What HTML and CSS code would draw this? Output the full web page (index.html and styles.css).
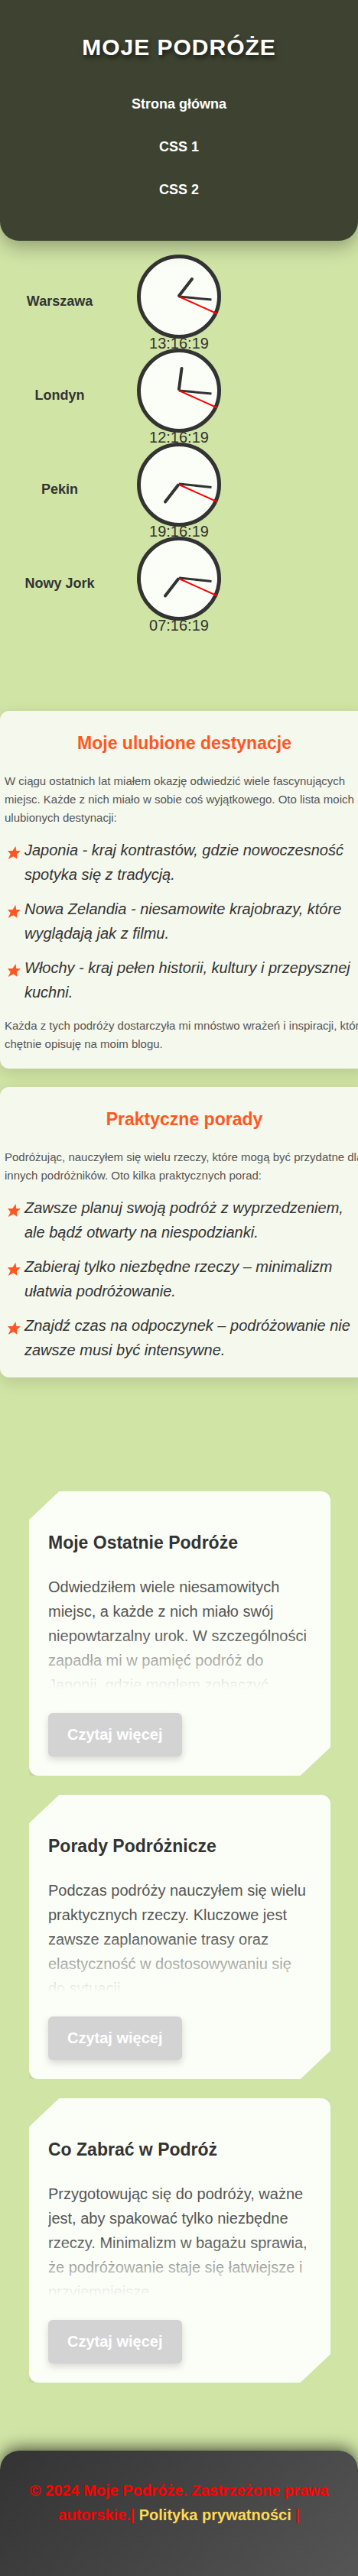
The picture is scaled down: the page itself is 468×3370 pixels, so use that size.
FILE: index.html
```html
<!DOCTYPE html>
<html lang="pl">
<head>
<meta charset="utf-8">
<meta name="viewport" content="width=device-width, initial-scale=1">
<title>Moje Podróże</title>
<link rel="stylesheet" href="styles.css">
</head>
<body>
<header class="site-header">
  <h1 class="site-title">MOJE PODRÓŻE</h1>
  <nav class="site-nav">
    <a href="#">Strona główna</a>
    <a href="#">CSS 1</a>
    <a href="#">CSS 2</a>
  </nav>
</header>

<section class="clocks">
  <div class="clock-row">
    <h2 class="city">Warszawa</h2>
    <div class="clock">
      <svg class="face" viewBox="0 0 110 110" aria-hidden="true">
        <circle class="dial" cx="55" cy="55" r="52.5"/>
        <path class="hour" d="M55 54L72 32"/>
        <path class="minute" d="M55 55L97.500 59"/>
        <path class="second" d="M55 55L105 77.500"/>
      </svg>
      <time class="time">13:16:19</time>
    </div>
  </div>
  <div class="clock-row">
    <h2 class="city">Londyn</h2>
    <div class="clock">
      <svg class="face" viewBox="0 0 110 110" aria-hidden="true">
        <circle class="dial" cx="55" cy="55" r="52.5"/>
        <path class="hour" d="M55 53L58.500 26"/>
        <path class="minute" d="M55 55L97.500 59"/>
        <path class="second" d="M55 55L105 77.500"/>
      </svg>
      <time class="time">12:16:19</time>
    </div>
  </div>
  <div class="clock-row">
    <h2 class="city">Pekin</h2>
    <div class="clock">
      <svg class="face" viewBox="0 0 110 110" aria-hidden="true">
        <circle class="dial" cx="55" cy="55" r="52.5"/>
        <path class="hour" d="M54 55.500L37 77.500"/>
        <path class="minute" d="M55 54L97.500 58.500"/>
        <path class="second" d="M55 55L105 77.500"/>
      </svg>
      <time class="time">19:16:19</time>
    </div>
  </div>
  <div class="clock-row">
    <h2 class="city">Nowy Jork</h2>
    <div class="clock">
      <svg class="face" viewBox="0 0 110 110" aria-hidden="true">
        <circle class="dial" cx="55" cy="55" r="52.5"/>
        <path class="hour" d="M54 55.500L37 77.500"/>
        <path class="minute" d="M55 54L97.500 58.500"/>
        <path class="second" d="M55 55L105 77.500"/>
      </svg>
      <time class="time">07:16:19</time>
    </div>
  </div>
</section>

<main>
  <div class="panels">
    <section class="panel">
      <h2>Moje ulubione destynacje</h2>
      <p>W ciągu ostatnich lat miałem okazję odwiedzić wiele fascynujących miejsc. Każde z nich miało w sobie coś wyjątkowego. Oto lista moich ulubionych destynacji:</p>
      <ul class="stars">
        <li>Japonia - kraj kontrastów, gdzie nowoczesność spotyka się z tradycją.</li>
        <li>Nowa Zelandia - niesamowite krajobrazy, które wyglądają jak z filmu.</li>
        <li>Włochy - kraj pełen historii, kultury i przepysznej kuchni.</li>
      </ul>
      <p>Każda z tych podróży dostarczyła mi mnóstwo wrażeń i inspiracji, które chętnie opisuję na moim blogu.</p>
    </section>
    <section class="panel">
      <h2>Praktyczne porady</h2>
      <p>Podróżując, nauczyłem się wielu rzeczy, które mogą być przydatne dla innych podróżników. Oto kilka praktycznych porad:</p>
      <ul class="stars">
        <li>Zawsze planuj swoją podróż z wyprzedzeniem, ale bądź otwarty na niespodzianki.</li>
        <li>Zabieraj tylko niezbędne rzeczy – minimalizm ułatwia podróżowanie.</li>
        <li>Znajdź czas na odpoczynek – podróżowanie nie zawsze musi być intensywne.</li>
      </ul>
    </section>
  </div>

  <div class="posts">
    <article class="post">
      <h2>Moje Ostatnie Podróże</h2>
      <p class="excerpt">Odwiedziłem wiele niesamowitych miejsc, a każde z nich miało swój niepowtarzalny urok. W szczególności zapadła mi w pamięć podróż do Japonii, gdzie mogłem zobaczyć</p>
      <button class="more" type="button">Czytaj więcej</button>
    </article>
    <article class="post">
      <h2>Porady Podróżnicze</h2>
      <p class="excerpt">Podczas podróży nauczyłem się wielu praktycznych rzeczy. Kluczowe jest zawsze zaplanowanie trasy oraz elastyczność w dostosowywaniu się do sytuacji.</p>
      <button class="more" type="button">Czytaj więcej</button>
    </article>
    <article class="post">
      <h2>Co Zabrać w Podróż</h2>
      <p class="excerpt">Przygotowując się do podróży, ważne jest, aby spakować tylko niezbędne rzeczy. Minimalizm w bagażu sprawia, że podróżowanie staje się łatwiejsze i przyjemniejsze.</p>
      <button class="more" type="button">Czytaj więcej</button>
    </article>
  </div>
</main>

<footer class="site-footer">
  <p>© 2024 Moje Podróże. Zastrzeżone prawa autorskie.| <a href="#">Polityka prywatności</a> |</p>
</footer>
</body>
</html>
```
FILE: styles.css
```css
* {
  box-sizing: border-box;
}

body {
  margin: 0;
  overflow-x: hidden;
  background: #d0e4a5;
  color: #333;
  font: 20px/32px "Liberation Sans", Arial, sans-serif;
}

h1, h2, p, ul {
  margin: 0;
  padding: 0;
}

.site-header {
  position: relative;
  z-index: 1;
  padding: 38px 20px 52px;
  border-radius: 0 0 25px 25px;
  background: #3e4331;
  box-shadow: 0 8px 24px rgba(0, 0, 0, 0.3);
  text-align: center;
}

.site-title {
  color: #fff;
  font-size: 30px;
  line-height: 48px;
  letter-spacing: 1px;
  text-shadow: 2px 4px 6px rgba(0, 0, 0, 0.6);
}

.site-nav {
  display: flex;
  flex-direction: column;
  align-items: center;
  gap: 27px;
  margin-top: 36px;
}

.site-nav a {
  color: #fff;
  font-size: 18px;
  line-height: 29px;
  font-weight: bold;
  text-decoration: none;
}

.clocks {
  margin-top: 18px;
}

.clock-row {
  display: grid;
  grid-template-columns: repeat(3, 1fr);
  align-items: center;
}

.city {
  font-size: 18px;
  line-height: 29px;
  text-align: center;
}

.clock {
  display: flex;
  flex-direction: column;
  align-items: center;
}

.face {
  display: block;
  width: 110px;
  height: 110px;
}

.dial {
  fill: #fbfef7;
  stroke: #333;
  stroke-width: 5;
}

.hour, .minute, .second {
  fill: none;
  stroke: #333;
}

.hour {
  stroke-width: 4;
  stroke-linecap: round;
}

.minute {
  stroke-width: 3;
}

.second {
  stroke: #f00;
  stroke-width: 2;
}

.time {
  line-height: 13px;
}

.panels {
  display: grid;
  gap: 24px;
  margin: 105px -14px 0 0;
}

.panel {
  padding: 24px 6px 20px;
  border-radius: 12px;
  background: #f5f8ed;
  box-shadow: 0 6px 20px rgba(0, 0, 0, 0.12);
}

.panel h2 {
  margin-bottom: 20px;
  color: #ff5722;
  font-size: 23px;
  line-height: 36px;
  text-align: center;
}

.panel p {
  margin-right: -6px;
  color: #555;
  font-size: 15px;
  line-height: 24px;
}

.stars {
  display: grid;
  gap: 13px;
  margin: 14px 0 16px;
  list-style: none;
  font-style: italic;
}

.panel .stars:last-child {
  margin-bottom: 0;
}

.stars li {
  display: grid;
  grid-template-columns: 26px 1fr;
}

.stars li::before {
  content: "";
  width: 17px;
  height: 17px;
  margin: 11px 0 0 4px;
  background: #ff5722;
  clip-path: polygon(62% 0, 66% 35%, 100% 37%, 72% 61%, 72% 98%, 44% 78%, 4% 100%, 22% 62%, 0 35%, 38% 36%);
}

.posts {
  display: grid;
  gap: 25px;
  margin: 149px 36px 0 38px;
}

.post {
  padding: 25px;
  border-radius: 12px;
  background: #fbfef7;
  box-shadow: 0 4px 12px rgba(0, 0, 0, 0.1);
  clip-path: polygon(10% 0, 100% 0, 100% 90%, 90% 100%, 0 100%, 0 10%);
}

.post h2 {
  margin: 24px 0;
  font-size: 23px;
  line-height: 36px;
}

.excerpt {
  position: relative;
  height: 150px;
  overflow: hidden;
  color: #555;
}

.excerpt::after {
  content: "";
  position: absolute;
  inset: 50% 0 0;
  background: linear-gradient(rgba(251, 254, 247, 0), #fbfef7);
}

.more {
  display: block;
  margin-top: 31px;
  padding: 12px 25px 13px;
  border: 0;
  border-radius: 6px;
  background: #d3d3d3;
  box-shadow: 0 4px 10px rgba(0, 0, 0, 0.15);
  color: #fff;
  font: bold 20px/32px "Liberation Sans", Arial, sans-serif;
}

.site-footer {
  margin-top: 89px;
  padding: 36px 20px 64px;
  border-radius: 25px 25px 0 0;
  background: linear-gradient(135deg, #333, #555);
  box-shadow: 0 -4px 20px rgba(0, 0, 0, 0.6);
  color: #f00;
  font-weight: bold;
  text-align: center;
}

.site-footer a {
  color: #ffd954;
  text-decoration: none;
}
```
